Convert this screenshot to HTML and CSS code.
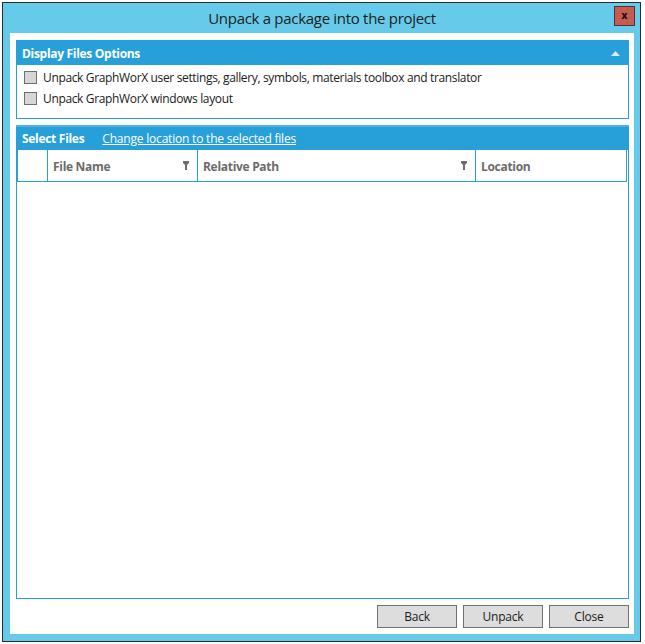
FILE: index.html
```html
<!DOCTYPE html>
<html>
<head>
<meta charset="utf-8">
<link rel="stylesheet" href="styles.css">
</head>
<body>
<div class="window">
  <div class="titlebar">
    <div class="title">Unpack a package into the project</div>
    <div class="close-btn">x</div>
  </div>
  <div class="client">
    <div class="panel options">
      <div class="panel-header">
        <span class="panel-title">Display Files Options</span>
        <svg class="collapse" width="9" height="5" viewBox="0 0 9 5"><polygon points="0,5 9,5 4.5,0" fill="#d8eef9"/></svg>
      </div>
      <div class="options-body">
        <label class="check-row"><span class="checkbox"></span><span class="check-label">Unpack GraphWorX user settings, gallery, symbols, materials toolbox and translator</span></label>
        <label class="check-row"><span class="checkbox"></span><span class="check-label">Unpack GraphWorX windows layout</span></label>
      </div>
    </div>
    <div class="panel files">
      <div class="panel-header files-header">
        <span class="panel-title">Select Files</span>
        <span class="link">Change location to the selected files</span>
      </div>
      <div class="grid">
        <div class="grid-head">
          <div class="col col-sel"></div>
          <div class="col col-name"><span>File Name</span><svg class="filter" width="6" height="9" viewBox="0 0 6 9"><polygon points="0,0 6,0 6,2 4,4 4,9 2,9 2,4 0,2" fill="#6e6e6e"/></svg></div>
          <div class="col col-path"><span>Relative Path</span><svg class="filter" width="6" height="9" viewBox="0 0 6 9"><polygon points="0,0 6,0 6,2 4,4 4,9 2,9 2,4 0,2" fill="#6e6e6e"/></svg></div>
          <div class="col col-loc"><span>Location</span></div>
        </div>
        <div class="grid-body"></div>
      </div>
    </div>
    <div class="buttons">
      <button class="btn">Back</button>
      <button class="btn">Unpack</button>
      <button class="btn">Close</button>
    </div>
  </div>
</div>
</body>
</html>
```
FILE: styles.css
```css
html, body {
  margin: 0;
  padding: 0;
  background: #ffffff;
}
body {
  width: 645px;
  height: 644px;
  overflow: hidden;
  font-family: "Open Sans", "Noto Sans", sans-serif;
}
.window {
  margin: 2px 0 0 2px;
  width: 639px;
  height: 640px;
  box-sizing: border-box;
  border: 1px solid #2b2b2b;
  background: #66cbea;
  display: flex;
  flex-direction: column;
  padding: 0 6px 7px 7px;
}
.titlebar {
  height: 30px;
  flex: none;
  display: flex;
  align-items: center;
  justify-content: center;
  position: relative;
}
.title {
  font-size: 15px;
  color: #1b1b1b;
  margin-top: -1px;
  letter-spacing: -0.3px;
}
.close-btn {
  position: absolute;
  right: -1px;
  top: 3px;
  width: 19px;
  height: 16px;
  background: #c75b52;
  border: 1px solid #4a3434;
  font-size: 10px;
  font-weight: 700;
  color: #000;
  display: flex;
  align-items: center;
  justify-content: center;
  line-height: 1;
  padding-bottom: 2px;
}
.client {
  flex: 1;
  background: #ffffff;
  display: flex;
  flex-direction: column;
  padding: 7px 5px 6px 6px;
  gap: 6px;
}
.panel {
  border: 1px solid #27a0da;
  display: flex;
  flex-direction: column;
}
.panel-header {
  height: 24px;
  background: #27a0da;
  display: flex;
  align-items: center;
  padding: 1px 6px 0 6px;
  color: #ffffff;
  font-size: 12px;
  margin: -1px -1px 0 -1px;
}
.panel-title {
  font-weight: 700;
  letter-spacing: -0.3px;
}
.collapse {
  margin-left: auto;
  margin-right: 3px;
}
.options-body {
  height: 47px;
  display: flex;
  flex-direction: column;
  padding: 6px 0 0 7px;
  gap: 8px;
}
.check-row {
  display: flex;
  align-items: center;
  gap: 6px;
  height: 13px;
}
.checkbox {
  width: 11px;
  height: 11px;
  background: #d6d6d6;
  border: 1px solid #707070;
  flex: none;
}
.check-label {
  font-size: 12px;
  color: #1a1a1a;
  letter-spacing: -0.35px;
}
.files {
  flex: 1;
}
.files-header {
  border-top: 2px solid #4db2e2;
  height: 23px;
  padding-top: 0;
}
.link {
  margin-left: 18px;
  text-decoration: underline;
  letter-spacing: -0.2px;
}
.grid {
  flex: 1;
  display: flex;
  flex-direction: column;
}
.grid-head {
  height: 31px;
  display: flex;
  border: 1px solid #27a0da;
  border-top: none;
  margin: 0 1px 0 0;
}
.col {
  display: flex;
  align-items: center;
  font-size: 12px;
  font-weight: 700;
  color: #6b6b6b;
  letter-spacing: -0.3px;
  padding: 2px 8px 0 5px;
  box-sizing: border-box;
}
.col-sel {
  width: 29px;
  padding: 0;
}
.col-name {
  width: 150px;
  border-left: 1px solid #27a0da;
}
.col-path {
  width: 278px;
  border-left: 1px solid #27a0da;
}
.col-loc {
  flex: 1;
  border-left: 1px solid #27a0da;
}
.filter {
  margin-left: auto;
  margin-top: -3px;
}
.grid-body {
  flex: 1;
}
.buttons {
  display: flex;
  justify-content: flex-end;
  gap: 6px;
  flex: none;
}
.btn {
  width: 80px;
  height: 23px;
  background: #dddddd;
  border: 1px solid #707070;
  font-family: "Open Sans", "Noto Sans", sans-serif;
  font-size: 12px;
  color: #1a1a1a;
  padding: 0;
  letter-spacing: -0.2px;
}
```
